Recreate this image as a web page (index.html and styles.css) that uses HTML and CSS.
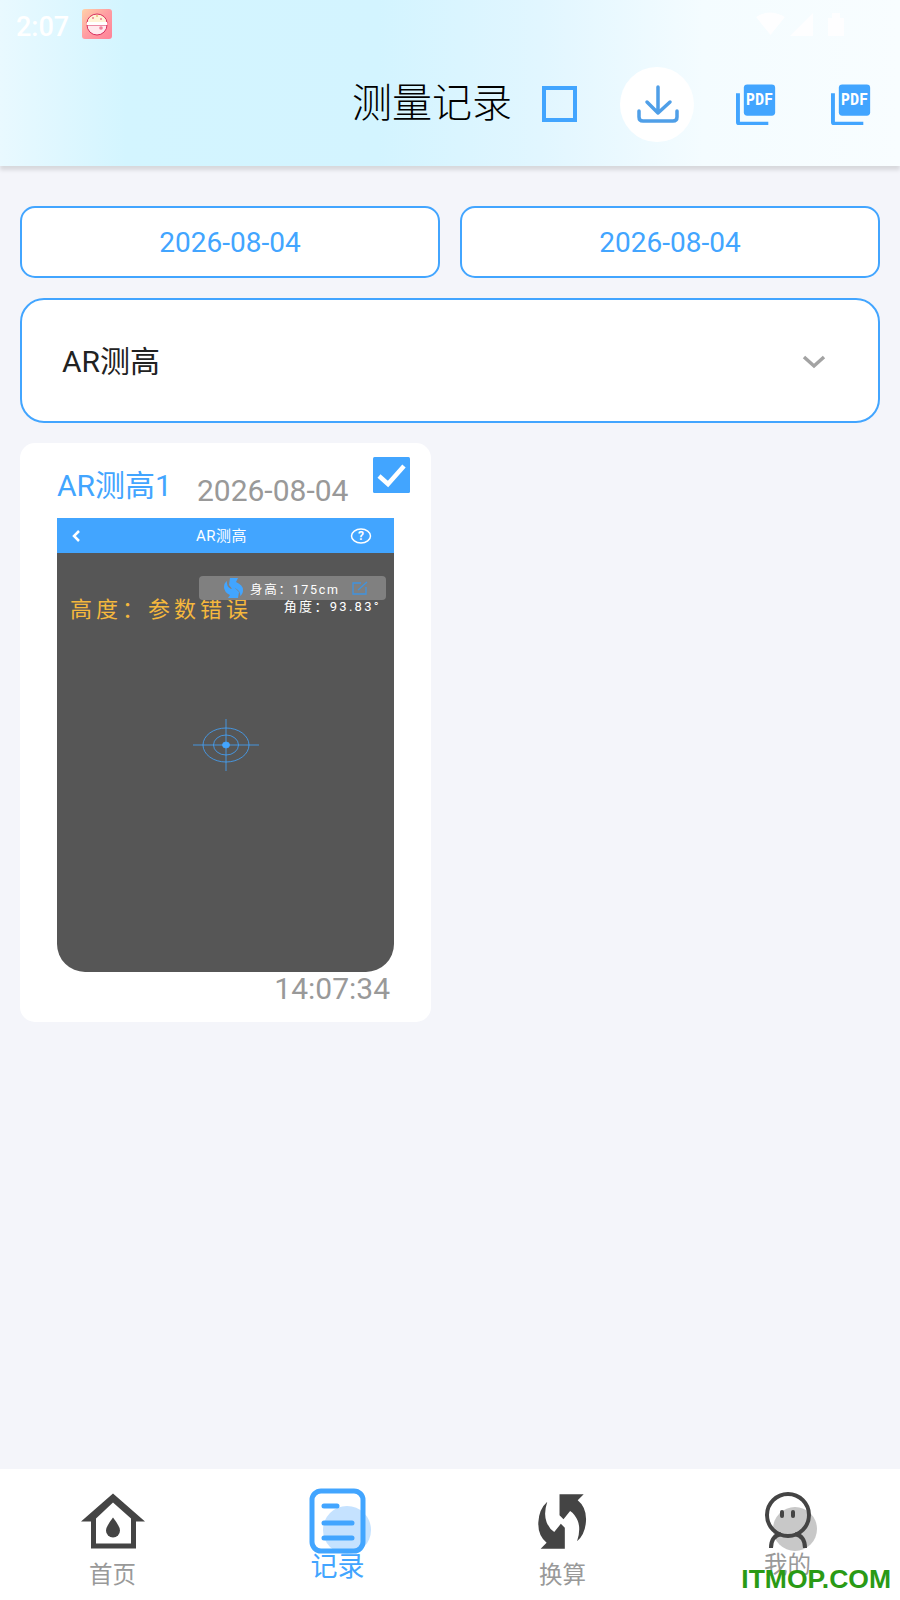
FILE: index.html
```html
<!DOCTYPE html>
<html lang="zh-CN">
  <head>
    <meta charset="UTF-8" />
    <meta name="viewport" content="width=device-width, initial-scale=1.0" />
    <title>测量记录</title>
    <link rel="stylesheet" href="styles.css">
  </head>
  <body>
    <div class="page">
      <header class="header">
        <div class="statusbar">
          <span class="clock">2:07</span>
          <svg class="appicon" width="30" height="30" viewBox="0 0 30 30">
            <defs>
              <linearGradient id="appbg" x1="0" y1="0" x2="1" y2="1">
                <stop offset="0" stop-color="#ffd2a8" />
                <stop offset="0.5" stop-color="#ff9ca2" />
                <stop offset="1" stop-color="#ff8298" />
              </linearGradient>
            </defs>
            <rect width="30" height="30" rx="3" fill="url(#appbg)" />
            <path d="M5 14a10 9 0 0 1 20 0z" fill="#fff3d6" stroke="#d8305f" stroke-width="1" />
            <path d="M5 16h20a10 10 0 0 1-20 0z" fill="#ffe9ee" stroke="#d8305f" stroke-width="1" />
            <rect x="5" y="13" width="20" height="3" fill="#fff" />
            <circle cx="19" cy="19" r="1.8" fill="#f0809a" />
            <circle cx="11" cy="9" r="0.8" fill="#d8305f" />
            <circle cx="15" cy="7" r="0.8" fill="#d8a030" />
            <circle cx="19" cy="10" r="0.8" fill="#d8305f" />
          </svg>
          <span class="status-spacer"></span>
          <svg class="statusicons" width="90" height="24" viewBox="0 0 90 24" fill="#fff">
            <path d="M0 5Q14-4 29 5L14.500 23z" />
            <path d="M34 24 57 1v23z" />
            <path d="M72 6h4V1h8v5h4v18H72z" />
          </svg>
        </div>
        <div class="toolbar">
          <h1 class="title">测量记录</h1>
          <div class="checkbox-empty"></div>
          <div class="download">
            <svg width="44" height="38" viewBox="0 0 44 38" fill="none" stroke="#4f9fe8" stroke-width="3.500" stroke-linecap="round" stroke-linejoin="round">
              <path d="M22 2v26M11 17l11 11 12-11" />
              <path d="M3 26v6q0 4 4 4h30q4 0 4-4v-6" />
            </svg>
          </div>
          <svg class="pdf" width="42" height="42" viewBox="0 0 42 42">
            <path d="M0 9h4v29h29v3.500H3q-3 0-3-3z" fill="#42a5ff" />
            <rect x="8" y="0" width="32" height="32" rx="3.500" fill="#42a5ff" />
            <text x="24" y="21.500" class="pdf-text">PDF</text>
          </svg>
          <svg class="pdf" width="42" height="42" viewBox="0 0 42 42">
            <path d="M0 9h4v29h29v3.500H3q-3 0-3-3z" fill="#42a5ff" />
            <rect x="8" y="0" width="32" height="32" rx="3.500" fill="#42a5ff" />
            <text x="24" y="21.500" class="pdf-text">PDF</text>
          </svg>
        </div>
      </header>

      <main class="content">
        <div class="dates">
          <div class="date-box">2026-08-04</div>
          <div class="date-box">2026-08-04</div>
        </div>

        <div class="select">
          <span>AR测高</span>
          <svg width="24" height="14" viewBox="0 0 24 14" fill="none" stroke="#a3a3a3" stroke-width="3.500">
            <path d="M2 2l10 9 10-9" />
          </svg>
        </div>

        <div class="card">
          <div class="card-head">
            <span class="card-name">AR测高1</span>
            <span class="card-date">2026-08-04</span>
            <svg class="card-check" width="37" height="36" viewBox="0 0 37 36">
              <rect width="37" height="36" rx="1.500" fill="#42a5ff" />
              <path d="M6 19l9 8L31 9" fill="none" stroke="#fff" stroke-width="4.500" />
            </svg>
          </div>

          <div class="shot">
            <div class="shot-bar">
              <svg class="shot-back" width="10" height="14" viewBox="0 0 10 14" fill="none" stroke="#fff" stroke-width="2.500">
                <path d="M8 2 3 7l5 5" />
              </svg>
              <span class="shot-title">AR测高</span>
              <svg width="22" height="18" viewBox="0 0 22 18" fill="none" stroke="#fff" stroke-width="1.500">
                <ellipse cx="11" cy="9" rx="9.500" ry="7" />
                <text x="11" y="13" class="help-text">?</text>
              </svg>
            </div>
            <div class="shot-pill">
              <svg width="20" height="20" viewBox="0 0 20 20" fill="#42a5ff">
                <path d="M6 0h8l-2 4q7 3 7 8 0 4-3 6 1-5-5-8-2 2-2 2L5 7z" />
                <path d="M14 20H4l2-3q-6-3-6-8 0-4 3-6-1 5 4 8l3-2 5 5z" />
              </svg>
              <span class="pill-text">身高：175cm</span>
              <svg class="pill-edit" width="16" height="14" viewBox="0 0 16 14" fill="none" stroke="#3f93e0" stroke-width="1.300">
                <path d="M9 2H1v11h13V6M6 9l9-8" />
              </svg>
            </div>
            <div class="shot-readout">
              <span class="height-text">高度：参数错误</span>
              <span class="angle-text">角度：93.83°</span>
            </div>
            <svg class="target" width="66" height="52" viewBox="0 0 66 52" fill="none" stroke="#42a5ff" stroke-width="0.800">
              <ellipse cx="33" cy="26" rx="23" ry="17" />
              <ellipse cx="33" cy="26" rx="12.500" ry="10" />
              <path d="M0 26h66M33 0v52" />
              <ellipse cx="33" cy="26" rx="3.500" ry="3" fill="#42a5ff" />
            </svg>
          </div>

          <div class="card-time">14:07:34</div>
        </div>
      </main>

      <nav class="tabbar">
        <div class="tab">
          <svg class="tab-icon" width="64" height="56" viewBox="0 0 64 56">
            <path d="M32 0 64 28H55V55H10V28H0zM32 9 15 25V50H50V25z" fill="#444" fill-rule="evenodd" />
            <path d="M32 24q7 9 7 13a7 7 0 0 1-14 0q0-4 7-13z" fill="#444" />
          </svg>
          <span class="tab-label">首页</span>
        </div>
        <div class="tab tab-active">
          <svg class="tab-icon" width="64" height="66" viewBox="0 0 64 66">
            <circle cx="38" cy="42" r="24" fill="#c5e2ff" />
            <rect x="3" y="3" width="51" height="60" rx="9" fill="none" stroke="#42a5ff" stroke-width="5" />
            <path d="M15 18H28M15 35H43M15 50H43" fill="none" stroke="#42a5ff" stroke-width="5" stroke-linecap="round" />
          </svg>
          <span class="tab-label">记录</span>
        </div>
        <div class="tab">
          <svg class="tab-icon" width="49" height="57" viewBox="25 22 148 170" fill="#444">
            <path d="M90 25H163L145 43Q172 65 170 105Q168 145 143 167Q155 130 145 105Q137 85 122 75L102 100 90 88z" />
            <path d="M90 25H163L145 43Q172 65 170 105Q168 145 143 167Q155 130 145 105Q137 85 122 75L102 100 90 88z" transform="rotate(180 98 107)" />
          </svg>
          <span class="tab-label">换算</span>
        </div>
        <div class="tab tab-me">
          <svg class="tab-icon" width="60" height="60" viewBox="0 0 60 60">
            <circle cx="32" cy="38" r="22" fill="#c8c8c8" />
            <circle cx="25" cy="24" r="21" fill="none" stroke="#444" stroke-width="4" />
            <path d="M8 57q0-12 10-14M42 57q0-12-10-14" fill="none" stroke="#444" stroke-width="4" />
            <rect x="17" y="19" width="4" height="8" rx="2" fill="#444" />
            <rect x="28" y="19" width="4" height="8" rx="2" fill="#444" />
          </svg>
          <span class="tab-label">我的</span>
        </div>
      </nav>

      <div class="watermark">ITMOP.COM</div>
    </div>
  </body>
</html>
```

FILE: styles.css
```css
* {
  box-sizing: border-box;
}

body {
  margin: 0;
  font-family: Roboto, "Noto Sans CJK SC", sans-serif;
  background: #f4f5fa;
}

.page {
  position: relative;
  width: 900px;
  height: 1600px;
  display: flex;
  flex-direction: column;
  overflow: hidden;
}

/* header */

.header {
  height: 166px;
  flex-shrink: 0;
  background: linear-gradient(90deg, #e9f9ff 0%, #d3f5ff 14%, #d3f4ff 42%, #e1f6ff 60%, #f4fcff 78%, #f8fdff 100%);
  box-shadow: 0 4px 4px rgba(0, 0, 0, 0.12);
  padding: 9px 28px 0 16px;
}

.statusbar {
  display: flex;
  align-items: center;
  height: 30px;
}

.clock {
  margin-top: 5px;
  font-size: 27px;
  font-weight: 500;
  color: #fff;
}

.appicon {
  margin-left: 13px;
}

.status-spacer {
  flex: 1;
}

.statusicons {
  margin-right: 26px;
  opacity: 0.9;
}

.toolbar {
  display: flex;
  align-items: center;
  margin-top: 28px;
  height: 74px;
}

.title {
  margin: 0 0 0 336px;
  font-size: 40px;
  font-weight: 300;
  line-height: 70px;
  color: #000;
  white-space: nowrap;
}

.checkbox-empty {
  width: 36px;
  height: 36px;
  margin-left: 30px;
  border: 4px solid #42a5ff;
}

.download {
  width: 75px;
  height: 75px;
  margin-left: 43px;
  border-radius: 50%;
  background: #fff;
  display: flex;
  align-items: center;
  justify-content: center;
}

.download svg {
  margin-left: 2px;
}

.pdf {
  margin: 2px 0 0 42px;
}

.pdf + .pdf {
  margin-left: 54px;
}

.pdf-text {
  font-family: "DejaVu Sans Mono", monospace;
  font-weight: 700;
  font-size: 15.500px;
  fill: #fff;
  text-anchor: middle;
}

/* filters */

.content {
  flex: 1;
  padding: 40px 20px 0;
}

.dates {
  display: flex;
  gap: 20px;
}

.date-box {
  flex: 1;
  height: 72px;
  border: 2px solid #42a5ff;
  border-radius: 15px;
  background: #fff;
  color: #42a5ff;
  font-size: 28px;
  display: flex;
  align-items: center;
  justify-content: center;
}

.select {
  height: 125px;
  margin-top: 20px;
  padding: 0 52px 0 40px;
  border: 2px solid #42a5ff;
  border-radius: 24px;
  background: #fff;
  color: #222;
  font-size: 30px;
  display: flex;
  align-items: center;
  justify-content: space-between;
}

.select svg {
  margin-top: 3px;
}

.select span {
  margin-top: -4px;
}

/* record card */

.card {
  width: 411px;
  height: 579px;
  margin-top: 20px;
  padding: 14px 0 0 37px;
  border-radius: 15px;
  background: #fff;
}

.card-head {
  display: flex;
  height: 61px;
}

.card-name {
  margin-top: 9px;
  color: #42a5ff;
  font-size: 30px;
  line-height: 40px;
}

.card-date {
  margin: 14px 0 0 25px;
  color: #999;
  font-size: 30px;
  line-height: 40px;
}

.card-check {
  margin-left: 25px;
}

.shot {
  position: relative;
  width: 337px;
  height: 454px;
  border-radius: 0 0 28px 28px;
  background: #565656;
}

.shot-bar {
  height: 35px;
  padding: 0 22px 0 14px;
  background: #42a5ff;
  color: #fff;
  display: flex;
  align-items: center;
}

.shot-back {
  margin-right: 12px;
}

.shot-title {
  flex: 1;
  margin-top: -3px;
  font-size: 15px;
  letter-spacing: 0.5px;
  text-align: center;
}

.help-text {
  font-size: 12px;
  font-weight: 700;
  fill: #fff;
  stroke: none;
  text-anchor: middle;
}

.shot-pill {
  position: absolute;
  left: 142px;
  top: 58px;
  width: 187px;
  height: 24px;
  padding-left: 25px;
  border-radius: 4px;
  background: #808080;
  color: #fff;
  display: flex;
  align-items: center;
  gap: 6px;
}

.pill-text {
  font-size: 12.500px;
  letter-spacing: 1.700px;
  white-space: nowrap;
}

.pill-edit {
  margin-left: 6px;
}

.shot-readout {
  padding: 43px 13px 0 13px;
  display: flex;
  justify-content: space-between;
  align-items: flex-start;
}

.height-text {
  color: #f5b83d;
  font-size: 22px;
  line-height: 28px;
  letter-spacing: 4px;
  white-space: nowrap;
}

.angle-text {
  margin-top: 2px;
  color: #fff;
  font-size: 13px;
  line-height: 18px;
  letter-spacing: 2.300px;
  white-space: nowrap;
}

.target {
  display: block;
  margin: 95px 0 0 136px;
}

.card-time {
  width: 333px;
  margin-top: -1px;
  color: #999;
  font-size: 30px;
  line-height: 36px;
  text-align: right;
}

/* bottom tabs */

.tabbar {
  height: 131px;
  flex-shrink: 0;
  background: #fff;
  display: grid;
  grid-template-columns: repeat(4, 1fr);
}

.tab {
  height: 131px;
  padding-top: 24px;
  color: #999;
  display: flex;
  flex-direction: column;
  align-items: center;
}

.tab-icon {
  display: block;
  height: 57px;
}

.tab-label {
  margin-top: 9px;
  font-size: 23.500px;
  line-height: 32px;
}

.tab-active {
  padding-top: 19px;
  color: #42a5ff;
}

.tab-active .tab-icon {
  height: 66px;
  margin-left: 6px;
}

.tab-active .tab-label {
  margin-top: -4px;
  font-size: 27px;
  line-height: 34px;
}

.tab-me {
  padding-top: 22px;
}

.tab-me .tab-icon {
  height: 60px;
  margin-left: 10px;
}

.tab-me .tab-label {
  margin-top: -2px;
}

.watermark {
  position: absolute;
  right: 9px;
  bottom: 7px;
  color: #2a9a15;
  font-family: "Liberation Sans", sans-serif;
  font-size: 26.500px;
  font-weight: 700;
  line-height: 28px;
}
```
